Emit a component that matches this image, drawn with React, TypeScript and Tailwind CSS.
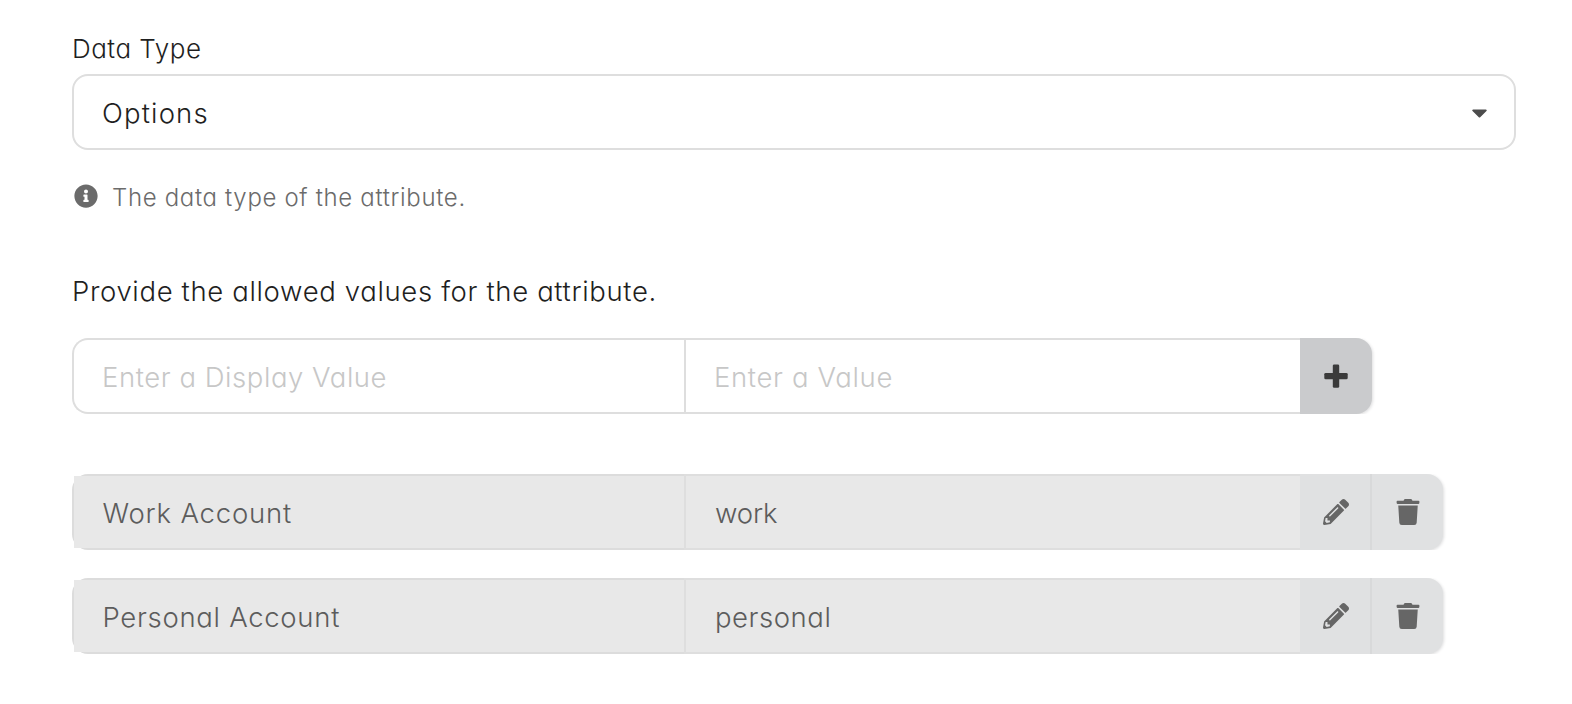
import type { ReactNode } from "react";
import { FaCaretDown, FaInfoCircle, FaPencilAlt, FaTrash } from "react-icons/fa";

function PlusIcon() {
  return (
    <svg width="24" height="24" viewBox="0 0 24 24" fill="currentColor">
      <rect x="0.3" y="8.9" width="23.4" height="6.4" rx="1.4" />
      <rect x="8.8" y="0.4" width="6.4" height="23.4" rx="1.4" />
    </svg>
  );
}

function Field({ className, children }: { className: string; children: ReactNode }) {
  return <div className={"flex items-center border-[#dedede] pt-[4px] text-[27.5px] " + className}>{children}</div>;
}

function OptionRow({ name, value, nameClass, valueClass }: { name: string; value: string; nameClass: string; valueClass: string }) {
  return (
    <div className="flex h-[76px] w-[1371px] text-[#5c5c5c]">
      <div className="w-[612px] rounded-l-2xl border-y-2 border-l-2 border-[#dcdcdc] bg-[#e8e8e8]">
        <Field className={"h-[72px] bg-[#e8e8e8] pl-[28.5px] " + nameClass}>{name}</Field>
      </div>
      <Field className={"w-[616px] border-y-2 border-l-2 bg-[#e8e8e8] " + valueClass}>{value}</Field>
      <div className="flex flex-1 rounded-r-2xl bg-[#e0e1e2] text-[#666666] shadow-[1px_1px_3px_rgba(34,36,38,0.15)] [clip-path:inset(0_-5px_0_0)]">
        <button className="flex w-[72px] items-center justify-center border-r-2 border-[#d8d9da] pl-[2px]" aria-label="Edit">
          <FaPencilAlt size={26} />
        </button>
        <button className="flex w-[71px] items-center justify-center" aria-label="Delete">
          <FaTrash size={26} />
        </button>
      </div>
    </div>
  );
}

export default function App() {
  return (
    <main className="flex h-[704px] flex-col overflow-hidden bg-white pl-[72px] font-['Inter',sans-serif] font-light whitespace-nowrap text-[#1f1f1f] [font-feature-settings:'cv11']">
      <div className="mt-[30px] h-[44px] pt-px text-[26px] leading-[36px] tracking-[0.5px]">Data Type</div>
      <div className="flex h-[76px] w-[1444px] items-center justify-between rounded-2xl border-2 border-[#dedede] pr-[22px] pl-[28px]">
        <span className="pt-[4px] text-[27.5px] tracking-[1.15px]">Options</span>
        <FaCaretDown size={25} className="text-[#4c4c4c]" />
      </div>
      <div className="mt-[30px] flex h-[32px] items-center text-[24px] leading-[32px] text-[#6b6b6b]">
        <FaInfoCircle size={24} className="ml-[2px]" />
        <span className="ml-[14px] pt-[3px] tracking-[0.66px]">The data type of the attribute.</span>
      </div>
      <div className="mt-[59px] h-[41px] text-[27.5px] leading-[40px] tracking-[0.65px]">Provide the allowed values for the attribute.</div>
      <div className="mt-[26px] flex h-[76px] text-[#c7c7c7]">
        <Field className="w-[612px] rounded-l-2xl border-y-2 border-l-2 pl-[28px] tracking-[0.55px]">Enter a Display Value</Field>
        <Field className="w-[616px] border-y-2 border-l-2 pl-[28px] tracking-[0.65px]">Enter a Value</Field>
        <button className="flex w-[72px] items-center justify-center rounded-r-2xl bg-[#cacbcd] text-[#3b3b3b] shadow-[1px_1px_3px_rgba(34,36,38,0.15)] [clip-path:inset(0_-5px_0_0)]" aria-label="Add">
          <PlusIcon />
        </button>
      </div>
      <div className="mt-[60px] flex flex-col gap-7">
        <OptionRow name="Work Account" value="work" nameClass="tracking-[0.8px]" valueClass="pl-[29px] tracking-[-0.1px]" />
        <OptionRow name="Personal Account" value="personal" nameClass="tracking-[0.7px]" valueClass="pl-[29px] tracking-[0.55px]" />
      </div>
    </main>
  );
}
